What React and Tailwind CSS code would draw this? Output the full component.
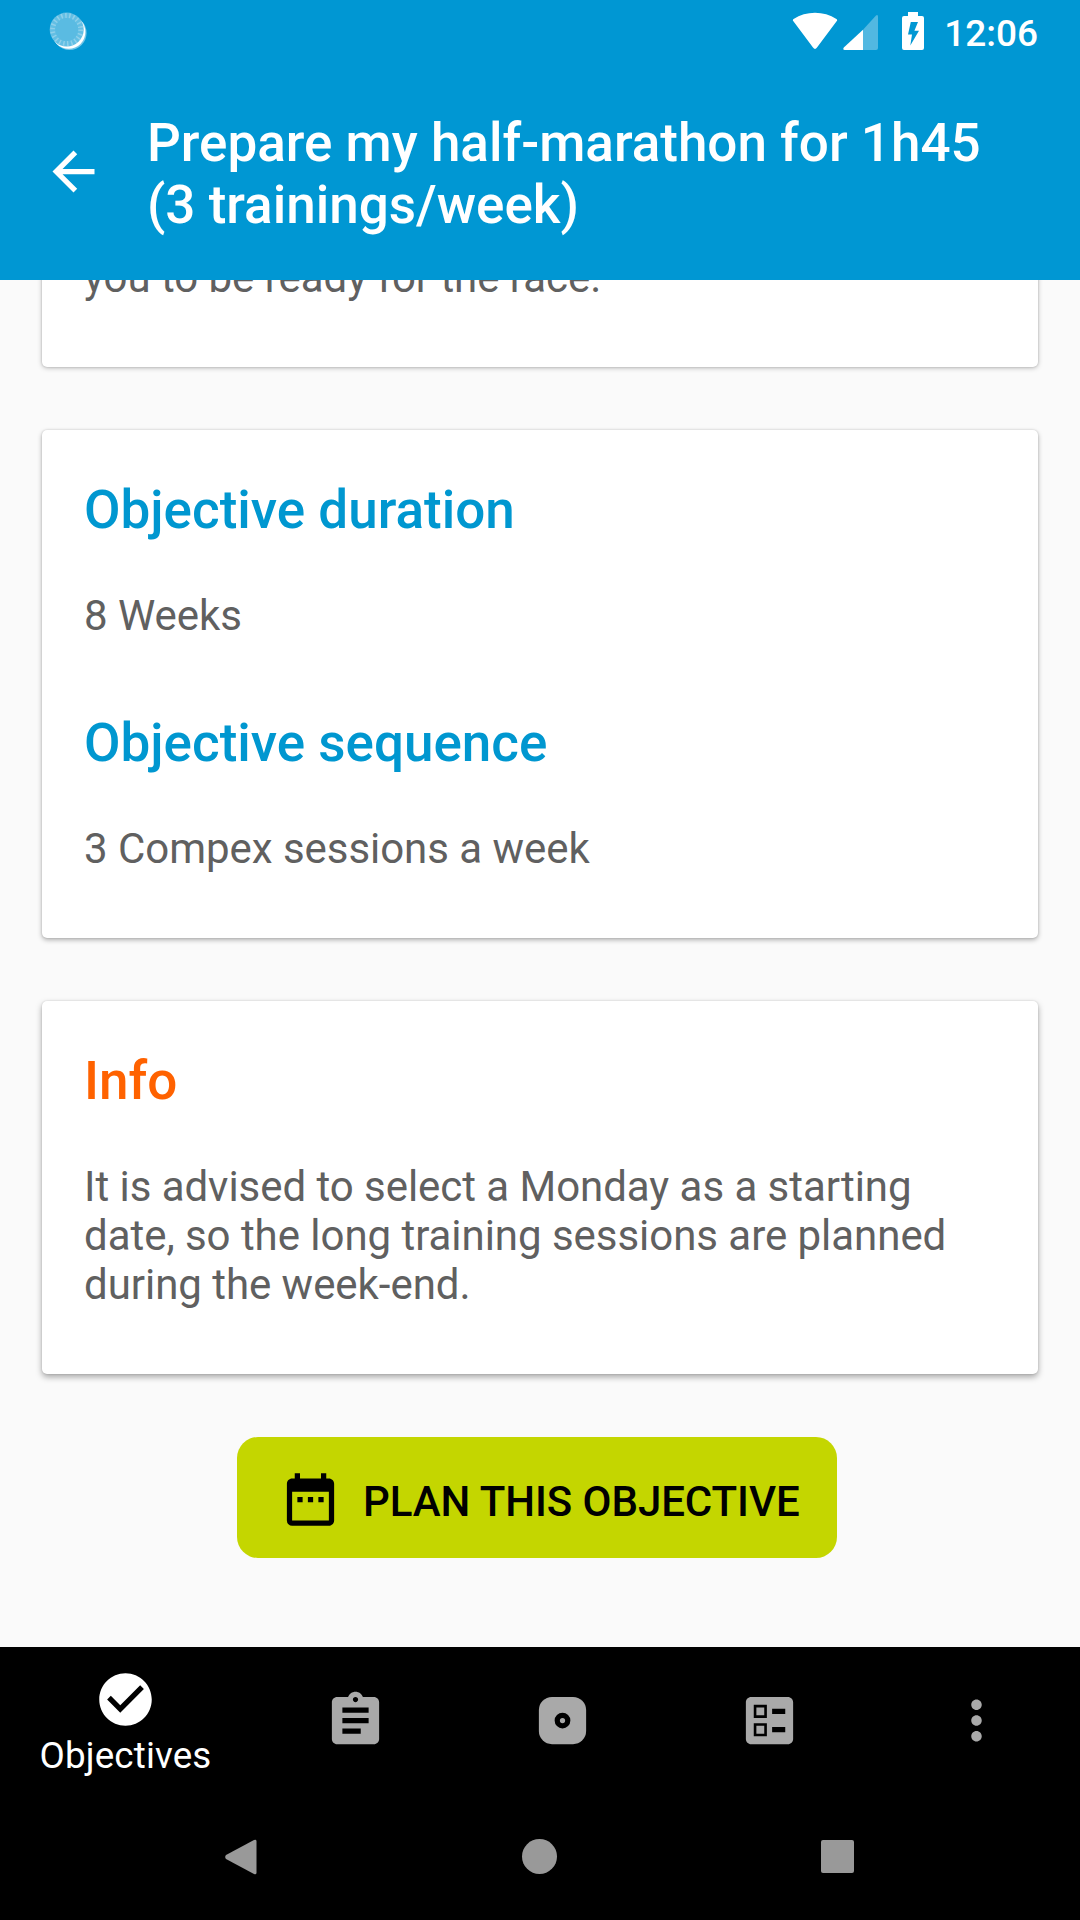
import React from "react";
import { MdArrowBack, MdAssignment, MdBallot, MdCheckCircle, MdDateRange, MdMoreVert } from "react-icons/md";

function Spinner() {
  return (
    <svg className="h-[40px] w-[40px]" viewBox="0 0 40 40">
      <circle cx="21.6" cy="22" r="17" fill="#fff" opacity="0.45" />
      <circle cx="20.6" cy="21" r="16.8" fill="#fff" />
      <circle cx="18.7" cy="18.6" r="17" fill="#63bfe4" />
      <circle cx="18.7" cy="18.6" r="14" fill="none" stroke="#8fd0ea" strokeWidth="5" strokeDasharray="1.5 2.5" />
      <circle cx="18.7" cy="18.6" r="11.5" fill="#5abbe2" />
    </svg>
  );
}

function StatusBar() {
  return (
    <div className="flex h-[63px] items-start">
      <div className="ml-[48px] mt-[11px]"><Spinner /></div>
      <div className="ml-auto flex items-start">
        <svg className="mt-[12px] h-[39px] w-[46px]" viewBox="0 0 46 39">
          <path d="M1.4 9.2Q.2 8 1.6 7C14-1.2 32-1.2 44.4 7Q45.8 8 44.6 9.2L25 35.6Q23 38.2 21 35.6Z" fill="#fff" />
        </svg>
        <svg className="ml-[5px] mt-[14px] h-[37px] w-[36px]" viewBox="0 0 36 37">
          <path d="M20 15.8V36H1.8Q-.6 35.8.8 33.6Z" fill="#fff" />
          <path d="M20 15.8L33 1.4Q35 0 35 2.8V34Q35 36 33 36H20Z" fill="#fff" opacity="0.32" />
        </svg>
        <svg className="ml-[23px] mt-[12px] h-[38px] w-[22px]" viewBox="0 0 22 38">
          <path fillRule="evenodd" d="M6 0H16V4H20Q22 4 22 6V36Q22 38 20 38H2Q0 38 0 36V6Q0 4 2 4H6ZM8.8 10L6 22.5H10L8.3 33.5L17 18.8H12.4L16 10Z" fill="#fff" />
        </svg>
        <span className="ml-[20px] mr-[42px] mt-[11px] text-[37px] leading-[46px] font-medium">12:06</span>
      </div>
    </div>
  );
}

function Card({ className, children }) {
  return (
    <section className={`rounded-[5px] bg-white px-[42px] ${className}`}>
      {children}
    </section>
  );
}

function Heading({ className, children }) {
  return <h2 className={`text-[53px] leading-[62px] font-medium ${className}`}>{children}</h2>;
}

function Body({ className = "", children }) {
  return <p className={`text-[42px] leading-[49px] tracking-[-0.04px] text-[#606060] ${className}`}>{children}</p>;
}

function TabBar() {
  return (
    <nav className="flex h-[147px] items-center text-[#a9a9a9]">
      <div className="flex h-full w-[251px] flex-col items-center pt-[21px] text-white">
        <MdCheckCircle className="h-[63px] w-[63px]" />
        <span className="mt-[3px] text-[36.75px] leading-[43px] tracking-[0.16px]">Objectives</span>
      </div>
      <div className="ml-[1px] flex w-[207px] justify-center"><MdAssignment className="h-[63px] w-[63px]" /></div>
      <div className="flex w-[207px] justify-center">
        <svg className="h-[63px] w-[63px]" viewBox="0 0 24 24">
          <rect x="3" y="3" width="18" height="18" rx="5" fill="currentColor" />
          <circle cx="12" cy="12" r="2" fill="none" stroke="#000" strokeWidth="2" />
        </svg>
      </div>
      <div className="flex w-[207px] justify-center"><MdBallot className="h-[63px] w-[63px]" /></div>
      <div className="flex w-[207px] justify-center"><MdMoreVert className="h-[63px] w-[63px]" /></div>
    </nav>
  );
}

function SystemBar() {
  return (
    <div className="flex h-[125px] items-center text-[#999999]">
      <svg className="ml-[225px] h-[36px] w-[32px]" viewBox="0 0 32 36">
        <path d="M31.5 2V34Q31.2 36 29 35L1 20Q-.6 18 1 16L29 1Q31.2 0 31.5 2Z" fill="currentColor" />
      </svg>
      <div className="ml-[265px] h-[35px] w-[35px] rounded-full bg-[#999999]" />
      <div className="ml-[264px] h-[33px] w-[33px] rounded-[2px] bg-[#999999]" />
    </div>
  );
}

export default function App() {
  return (
    <div className="flex h-[1920px] w-[1080px] flex-col overflow-hidden bg-[#fafafa] font-[Roboto,sans-serif]">
      <header className="relative h-[280px] shrink-0 bg-[#0097d3] text-white">
        <StatusBar />
        <div className="flex items-start">
          <MdArrowBack className="ml-[42px] mt-[77px] h-[63px] w-[63px]" />
          <h1 className="ml-[42px] mt-[49px] text-[53px] leading-[62px] font-medium whitespace-nowrap">
            Prepare my half-marathon for 1h45
            <br />
            (3 trainings/week)
          </h1>
        </div>
      </header>

      <main className="flex h-[1367px] shrink-0 flex-col overflow-hidden px-[42px]">
        <Card className="-mt-[27px] h-[114px] shrink-0 shadow-[0_1px_5px_rgba(0,0,0,0.26),0_0_2px_rgba(0,0,0,0.18)]">
          <Body>you to be ready for the race.</Body>
        </Card>
        <Card className="mt-[63px] h-[508px] shrink-0 pt-[49px] shadow-[0_2px_5px_rgba(0,0,0,0.3),0_0_2px_rgba(0,0,0,0.16)]">
          <Heading className="text-[#0097d0]">Objective duration</Heading>
          <Body className="mt-[50px]">8 Weeks</Body>
          <Heading className="mt-[72px] text-[#0097d0]">Objective sequence</Heading>
          <Body className="mt-[50px]">3 Compex sessions a week</Body>
        </Card>
        <Card className="mt-[63px] h-[373px] shrink-0 pt-[49px] shadow-[0_3px_6px_rgba(0,0,0,0.34),0_0_2px_rgba(0,0,0,0.14)]">
          <Heading className="text-[#ff6200]">Info</Heading>
          <Body className="mt-[50px]">
            It is advised to select a Monday as a starting
            <br />
            date, so the long training sessions are planned
            <br />
            during the week-end.
          </Body>
        </Card>
        <button className="ml-[195px] mt-[63px] flex h-[121px] w-[600px] shrink-0 items-center rounded-[21px] bg-[#c4d600] pl-[42px] text-black">
          <MdDateRange className="mt-[3px] h-[63px] w-[63px]" />
          <span className="ml-[21px] mt-[8px] text-[42px] leading-[49px] font-medium tracking-[-0.06px] whitespace-nowrap">PLAN THIS OBJECTIVE</span>
        </button>
      </main>

      <footer className="h-[273px] shrink-0 bg-black">
        <TabBar />
        <SystemBar />
      </footer>
    </div>
  );
}
